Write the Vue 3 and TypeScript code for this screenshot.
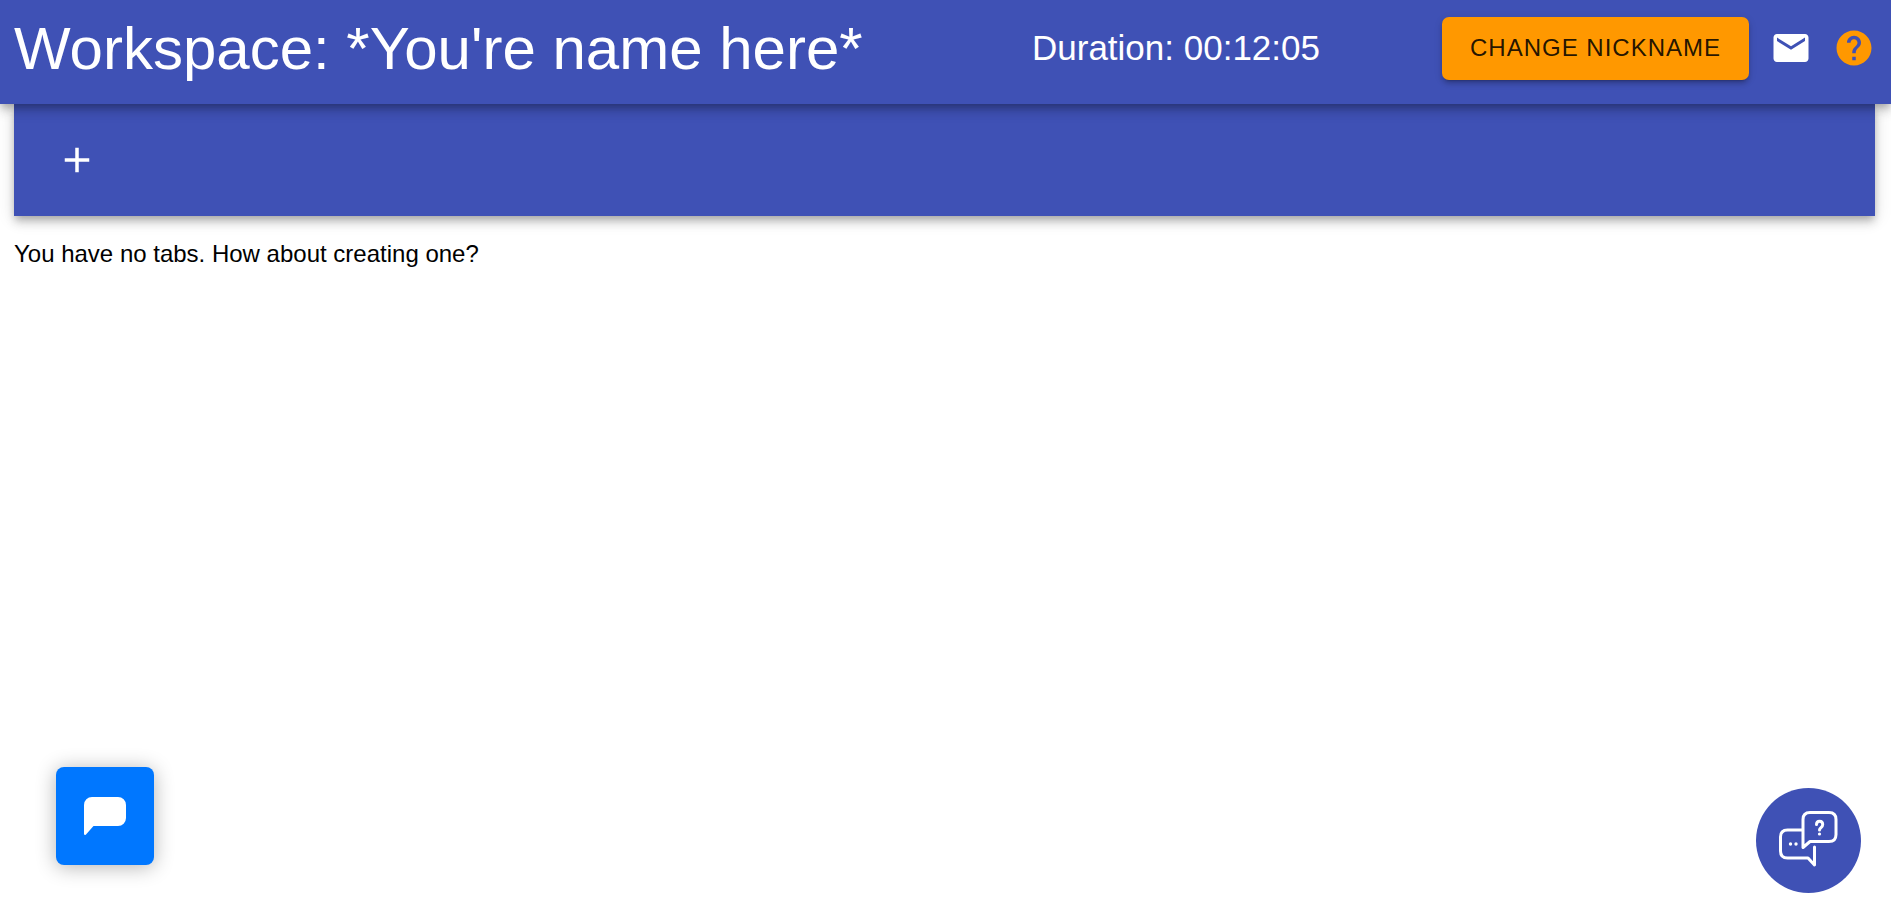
<script setup lang="ts">
import { computed, ref } from 'vue'

const nickname = ref("*You're name here*")
const seconds = ref(725)

const duration = computed(() => {
  const parts = [
    Math.floor(seconds.value / 3600),
    Math.floor(seconds.value / 60) % 60,
    seconds.value % 60,
  ]
  return parts.map((part) => String(part).padStart(2, '0')).join(':')
})
</script>

<template>
  <div class="workspace">
    <header class="app-bar">
      <h1 class="title">Workspace: {{ nickname }}</h1>
      <h2 class="duration">Duration: {{ duration }}</h2>
      <div class="actions">
        <button class="nickname-button" type="button">CHANGE NICKNAME</button>
        <button class="icon-button" type="button" aria-label="Messages">
          <svg viewBox="0 0 24 24" fill="currentColor" aria-hidden="true">
            <path d="M20 4H4c-1.100 0-2 .9-2 2v12c0 1.100.9 2 2 2h16c1.100 0 2-.9 2-2V6c0-1.100-.9-2-2-2zm0 4l-8 5-8-5V6l8 5 8-5v2z" />
          </svg>
        </button>
        <button class="icon-button help" type="button" aria-label="Help">
          <svg viewBox="0 0 24 24" fill="currentColor" aria-hidden="true">
            <path d="M12 2C6.480 2 2 6.480 2 12s4.480 10 10 10 10-4.480 10-10S17.520 2 12 2zm1 17h-2v-2h2v2zm2.070-7.750l-.9.920C13.450 12.900 13 13.500 13 15h-2v-.5c0-1.100.450-2.100 1.170-2.830l1.240-1.260c.370-.360.590-.860.590-1.410 0-1.100-.9-2-2-2s-2 .9-2 2H8c0-2.210 1.790-4 4-4s4 1.790 4 4c0 .880-.360 1.680-.930 2.250z" />
          </svg>
        </button>
      </div>
    </header>

    <main class="content">
      <nav class="tab-bar" aria-label="Tabs">
        <button class="icon-button" type="button" aria-label="Add tab">
          <svg viewBox="0 0 24 24" fill="currentColor" aria-hidden="true">
            <path d="M19 13h-6v6h-2v-6H5v-2h6V5h2v6h6v2z" />
          </svg>
        </button>
      </nav>
      <p class="empty">You have no tabs. How about creating one?</p>
    </main>

    <button class="chat-button" type="button" aria-label="Open chat">
      <svg viewBox="0 0 42 38" aria-hidden="true">
        <path fill="#fff" d="M8 0H34A8 8 0 0 1 42 8V21A8 8 0 0 1 34 29H9.500L2 37.400Q0 38.800 0 36.500V8A8 8 0 0 1 8 0Z" />
      </svg>
    </button>

    <button class="support-button" type="button" aria-label="Questions and answers">
      <svg viewBox="0 0 105 105" fill="none" stroke="#fff" stroke-width="3" stroke-linecap="round" stroke-linejoin="round" aria-hidden="true">
        <path d="M54 24.500H73Q80 24.500 80 31.500V46.500Q80 53.500 73 53.500H54L47 59.500V31.500Q47 24.500 54 24.500Z" />
        <path d="M46 42H31.500Q24.500 42 24.500 49V63Q24.500 70 31.500 70H52L58.500 77V59" />
        <path d="M60.500 36.500C60.500 32 66.700 32 66.700 36.500C66.700 39.500 63.500 39.500 63.500 42" />
        <circle cx="63.500" cy="46" r="1.600" fill="#fff" stroke="none" />
        <circle cx="34.500" cy="56" r="1.700" fill="#fff" stroke="none" />
        <circle cx="40" cy="56" r="1.700" fill="#fff" stroke="none" />
      </svg>
    </button>
  </div>
</template>

<style>
body {
  margin: 0;
  background: #fff;
}
</style>

<style scoped>
.workspace {
  font-family: "Liberation Sans", Arial, sans-serif;
  color: #000;
}

button {
  border: 0;
  padding: 0;
  font: inherit;
  cursor: pointer;
}

svg {
  display: block;
}

.app-bar {
  position: relative;
  z-index: 1;
  display: grid;
  grid-template-columns: 1fr auto auto;
  column-gap: 122px;
  align-items: center;
  min-height: 96px;
  padding: 0 16px 8px 14px;
  color: #fff;
  background: #3f51b5;
  box-shadow:
    0 4px 7px -2px rgba(0, 0, 0, 0.2),
    0 7px 9px 0 rgba(0, 0, 0, 0.14),
    0 2px 18px 0 rgba(0, 0, 0, 0.12);
}

.title {
  margin: 0;
  padding-top: 2px;
  font-size: 60px;
  line-height: 72px;
  font-weight: 400;
}

.duration {
  margin: 0;
  font-size: 35px;
  line-height: 56px;
  font-weight: 400;
}

.actions {
  display: flex;
  align-items: center;
  gap: 21px;
}

.nickname-button {
  padding: 0 28px 2px;
  border-radius: 7px;
  font-size: 24px;
  line-height: 61px;
  letter-spacing: 1px;
  color: rgba(0, 0, 0, 0.87);
  background: #ff9800;
  box-shadow:
    0 5px 2px -4px rgba(0, 0, 0, 0.2),
    0 4px 4px 0 rgba(0, 0, 0, 0.14),
    0 2px 9px 0 rgba(0, 0, 0, 0.12);
}

.icon-button {
  width: 42px;
  height: 42px;
  color: #fff;
  background: transparent;
}

.icon-button svg {
  width: 42px;
  height: 42px;
}

.help {
  color: #ff9800;
}

.content {
  padding: 0 16px 0 14px;
}

.tab-bar {
  display: flex;
  align-items: center;
  height: 112px;
  padding: 0 42px;
  background: #3f51b5;
  box-shadow:
    0 4px 7px -2px rgba(0, 0, 0, 0.2),
    0 7px 9px 0 rgba(0, 0, 0, 0.14),
    0 2px 18px 0 rgba(0, 0, 0, 0.12);
}

.empty {
  margin: 20px 0 0;
  font-size: 24px;
  line-height: 35px;
}

.chat-button {
  position: fixed;
  left: 56px;
  bottom: 48px;
  display: grid;
  place-items: center;
  width: 98px;
  height: 98px;
  border-radius: 8px;
  background: #0077ff;
  box-shadow: 0 2px 20px rgba(0, 0, 0, 0.3);
}

.chat-button svg {
  width: 42px;
  height: 38px;
}

.support-button {
  position: fixed;
  right: 30px;
  bottom: 20px;
  width: 105px;
  height: 105px;
  border-radius: 50%;
  background: #3f51b5;
}

.support-button svg {
  width: 105px;
  height: 105px;
}
</style>
